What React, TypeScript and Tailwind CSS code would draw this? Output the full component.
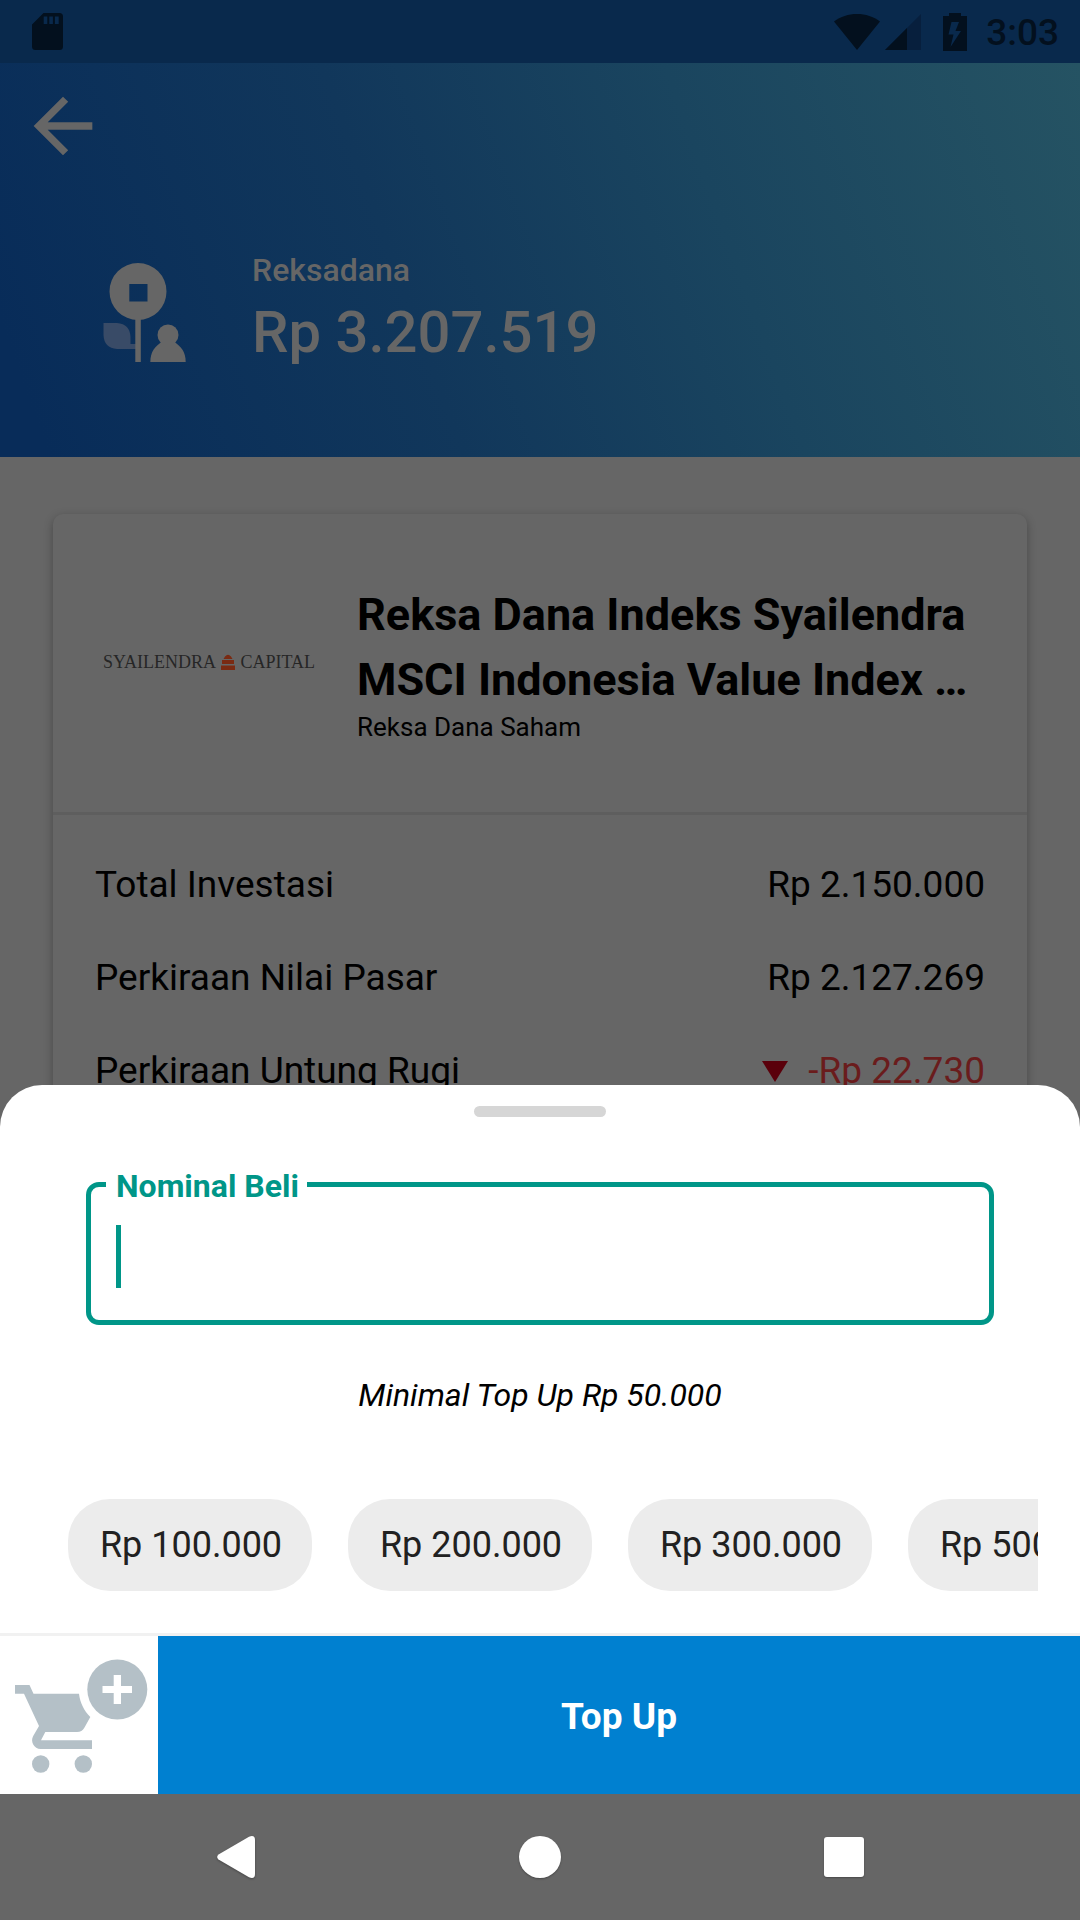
import { useState } from "react";

const summaryRows = [
  { label: "Total Investasi", value: "Rp 2.150.000", loss: false },
  { label: "Perkiraan Nilai Pasar", value: "Rp 2.127.269", loss: false },
  { label: "Perkiraan Untung Rugi", value: "-Rp 22.730", loss: true },
];

const presets = [
  { label: "Rp 100.000", amount: "100000" },
  { label: "Rp 200.000", amount: "200000" },
  { label: "Rp 300.000", amount: "300000" },
  { label: "Rp 500.000", amount: "500000" },
];

function StatusBar() {
  return (
    <div className="flex h-[63px] items-center bg-[#09294c] pr-[21px] pl-8 text-[#03101e]">
      <svg width="31" height="37" viewBox="0 0 31 37" aria-hidden="true">
        <path
          fill="currentColor"
          fillRule="evenodd"
          d="M11.5 0H27.500Q31 0 31 3.500V33.500Q31 37 27.500 37H3.500Q0 37 0 33.500V11.500ZM11.700 3.500V11H15.300V3.500ZM17.300 3.500V11H20.900V3.500ZM22.900 3.500V11H26.700V3.500Z"
        />
      </svg>
      <svg className="ml-auto" width="46" height="36" viewBox="0 0 46 36" aria-hidden="true">
        <path fill="currentColor" d="M23 36L0 7.500C6.500 2.500 14.500 0 23 0S39.500 2.500 46 7.500Z" />
      </svg>
      <svg className="ml-[5px]" width="36" height="36" viewBox="0 0 36 36" aria-hidden="true">
        <path fill="#071f3d" d="M0 36L36 0V36Z" />
        <path fill="currentColor" d="M0 36L22 14V36Z" />
      </svg>
      <svg className="ml-[22px]" width="24" height="38" viewBox="0 0 24 38" aria-hidden="true">
        <path
          fill="currentColor"
          fillRule="evenodd"
          d="M6 0H18V3H24V38H0V3H6ZM8.500 9L5.500 21.500H10.500L7.500 34L18 18H12.500L16 9Z"
        />
      </svg>
      <span className="ml-[19px] pt-[3px] text-[37px] leading-[44px] font-medium">3:03</span>
    </div>
  );
}

function FundIcon() {
  return (
    <svg className="shrink-0" width="88" height="108" viewBox="100 254 88 108" aria-hidden="true">
      <path fill="#394b67" d="M103.500 322H117Q130 323 130.500 336V343H136V348H117Q104 347 103.500 334Z" />
      <path
        fill="#666666"
        fillRule="evenodd"
        d="M109.500 290.500A28.500 28.500 0 0 1 166.500 290.500A28.500 28.500 0 0 1 109.500 290.500ZM129.300 283V300.500H147.500V283Z"
      />
      <rect x="135.300" y="318" width="5.500" height="43" fill="#666666" />
      <circle cx="168" cy="334" r="10.500" fill="#666666" />
      <path fill="#666666" d="M150.300 361C150.300 351 155 345 162 341H174C181 345 185.700 351 185.700 361Z" />
    </svg>
  );
}

function Header() {
  return (
    <header className="h-[394px] bg-[linear-gradient(70deg,#082c59_4%,#11375b_38%,#1a455f_66%,#255363_100%)] pt-[19px] text-[#666666]">
      <button type="button" aria-label="Kembali" className="ml-[19px] block">
        <svg width="88" height="88" viewBox="0 0 24 24" aria-hidden="true">
          <path fill="currentColor" d="M20 11H7.830l5.590-5.590L12 4l-8 8 8 8 1.410-1.410L7.830 13H20v-2z" />
        </svg>
      </button>
      <div className="mt-[81px] flex items-center gap-16 pl-[100px]">
        <FundIcon />
        <div className="flex flex-col gap-[9px] font-medium">
          <p className="text-[32px] leading-[38px]">Reksadana</p>
          <p className="text-[58px] leading-[68px]">Rp 3.207.519</p>
        </div>
      </div>
    </header>
  );
}

function ManagerLogo() {
  return (
    <div className="flex w-[212px] shrink-0 items-center justify-between font-['Liberation_Serif',serif] text-[18px] leading-5 text-[#262626]">
      <span>SYAILENDRA</span>
      <svg width="14" height="16" viewBox="0 0 14 16" aria-hidden="true">
        <path fill="#7a2a12" d="M4 2.500Q7-1 10 2.500L11.500 5H2.500ZM1 6H13V10H1ZM0 11.500H14V16H0Z" />
      </svg>
      <span>CAPITAL</span>
    </div>
  );
}

function FundCard() {
  return (
    <section className="mx-[53px] mt-[57px] rounded-[10px] bg-[#666666] pb-16 text-black shadow-[0_3px_10px_rgba(0,0,0,0.3)]">
      <div className="flex items-center gap-[42px] border-b-[3px] border-[#5e5e5e] pt-[68px] pr-10 pb-[70px] pl-[50px]">
        <ManagerLogo />
        <div className="min-w-0 flex-1">
          <h1 className="line-clamp-2 text-[45px] leading-[65px] font-bold">
            Reksa Dana Indeks Syailendra MSCI Indonesia Value Index …
          </h1>
          <p className="text-[26px] leading-[30px]">Reksa Dana Saham</p>
        </div>
      </div>
      <dl className="flex flex-col gap-[49px] px-[42px] pt-12 text-[37px] leading-[44px]">
        {summaryRows.map((row) => (
          <div key={row.label} className="flex items-center justify-between">
            <dt>{row.label}</dt>
            {row.loss ? (
              <dd className="flex items-center gap-5 text-[#6a1c1c]">
                <svg width="26" height="21" viewBox="0 0 26 21" aria-hidden="true">
                  <path fill="#5a000b" d="M0 0H26L13 21Z" />
                </svg>
                {row.value}
              </dd>
            ) : (
              <dd>{row.value}</dd>
            )}
          </div>
        ))}
      </dl>
    </section>
  );
}

function CartPlusIcon() {
  return (
    <svg width="158" height="158" viewBox="0 0 158 158" aria-hidden="true">
      <g fill="#b4c0c7">
        <path
          fillRule="evenodd"
          d="M15 49H29.500L33.500 57.700H79C80 66.500 84 74.500 90.300 81L84.500 91.500Q82 96 77 96H45.300L41 104.300H92V113H40.700C34 113 30 105.500 33.200 100L39 90L24 57.700H15Z"
        />
        <circle cx="40.700" cy="128" r="8.700" />
        <circle cx="83.300" cy="128" r="8.700" />
        <circle cx="117.300" cy="53.500" r="30" />
      </g>
      <path fill="#ffffff" d="M113.700 39H121V50H132V57H121V68H113.700V57H102.500V50H113.700Z" />
    </svg>
  );
}

function TopUpSheet() {
  const [amount, setAmount] = useState("");

  return (
    <div className="rounded-t-[42px] bg-white pt-[21px]">
      <div className="mx-auto h-[11px] w-[132px] rounded-full bg-[#d6d6d6]" />
      <fieldset className="mx-[86px] mt-[46px] rounded-[13px] border-[5px] border-[#009688]">
        <legend className="ml-[15px] pt-1 pr-2 pl-2.5 text-[32px] leading-[38px] font-bold text-[#009688]">
          <label htmlFor="nominal">Nominal Beli</label>
        </legend>
        <div className="relative px-[25px] pt-5 pb-8">
          <input
            id="nominal"
            type="text"
            inputMode="numeric"
            value={amount}
            onChange={(event) => setAmount(event.target.value)}
            className="block h-[63px] w-full bg-transparent text-[42px] text-black caret-[#009688] outline-none"
          />
          {amount === "" && (
            <span className="pointer-events-none absolute top-5 left-[25px] h-[63px] w-[5px] bg-[#009688]" />
          )}
        </div>
      </fieldset>
      <p className="mt-[51px] text-center text-[32px] leading-[38px] text-black italic">Minimal Top Up Rp 50.000</p>
      <div className="mt-[85px] mr-[42px] ml-[68px] flex gap-9 overflow-x-auto pb-[42px] [scrollbar-width:none]">
        {presets.map((preset) => (
          <button
            key={preset.amount}
            type="button"
            onClick={() => setAmount(preset.amount)}
            className="h-[92px] w-[244px] shrink-0 rounded-[42px] bg-[#ececec] pl-0.5 text-[36px] leading-[44px] whitespace-nowrap text-[#212121]"
          >
            {preset.label}
          </button>
        ))}
      </div>
      <div className="flex border-t-[3px] border-[#f1f1f1]">
        <button type="button" aria-label="Tambah ke keranjang" className="shrink-0">
          <CartPlusIcon />
        </button>
        <button type="button" className="flex-1 bg-[#0080d0] pt-1 text-[37px] leading-[44px] font-bold text-white">
          Top Up
        </button>
      </div>
    </div>
  );
}

function NavigationBar() {
  return (
    <nav className="flex h-[126px] bg-[#666666] px-[84px]">
      <button type="button" aria-label="Back" className="flex flex-1 items-center justify-center">
        <svg className="drop-shadow-[0_1px_1px_rgba(0,0,0,0.3)]" width="38" height="42" viewBox="0 0 38 42" aria-hidden="true">
          <path fill="#ffffff" d="M1.500 18.500L32 .700Q38-1.500 38 4V38Q38 43.500 32 41.300L1.500 23.500Q-1.200 21 1.500 18.500Z" />
        </svg>
      </button>
      <button type="button" aria-label="Home" className="flex flex-1 items-center justify-center">
        <span className="size-[42px] rounded-full bg-white shadow-[0_1px_2px_rgba(0,0,0,0.3)]" />
      </button>
      <button type="button" aria-label="Recents" className="flex flex-1 items-center justify-center">
        <span className="size-10 rounded-[3px] bg-white shadow-[0_1px_2px_rgba(0,0,0,0.3)]" />
      </button>
    </nav>
  );
}

export default function App() {
  return (
    <div className="relative min-h-screen overflow-hidden bg-[#666666] font-[Roboto,sans-serif]">
      <StatusBar />
      <Header />
      <FundCard />
      <div className="absolute inset-x-0 bottom-0">
        <TopUpSheet />
        <NavigationBar />
      </div>
    </div>
  );
}
